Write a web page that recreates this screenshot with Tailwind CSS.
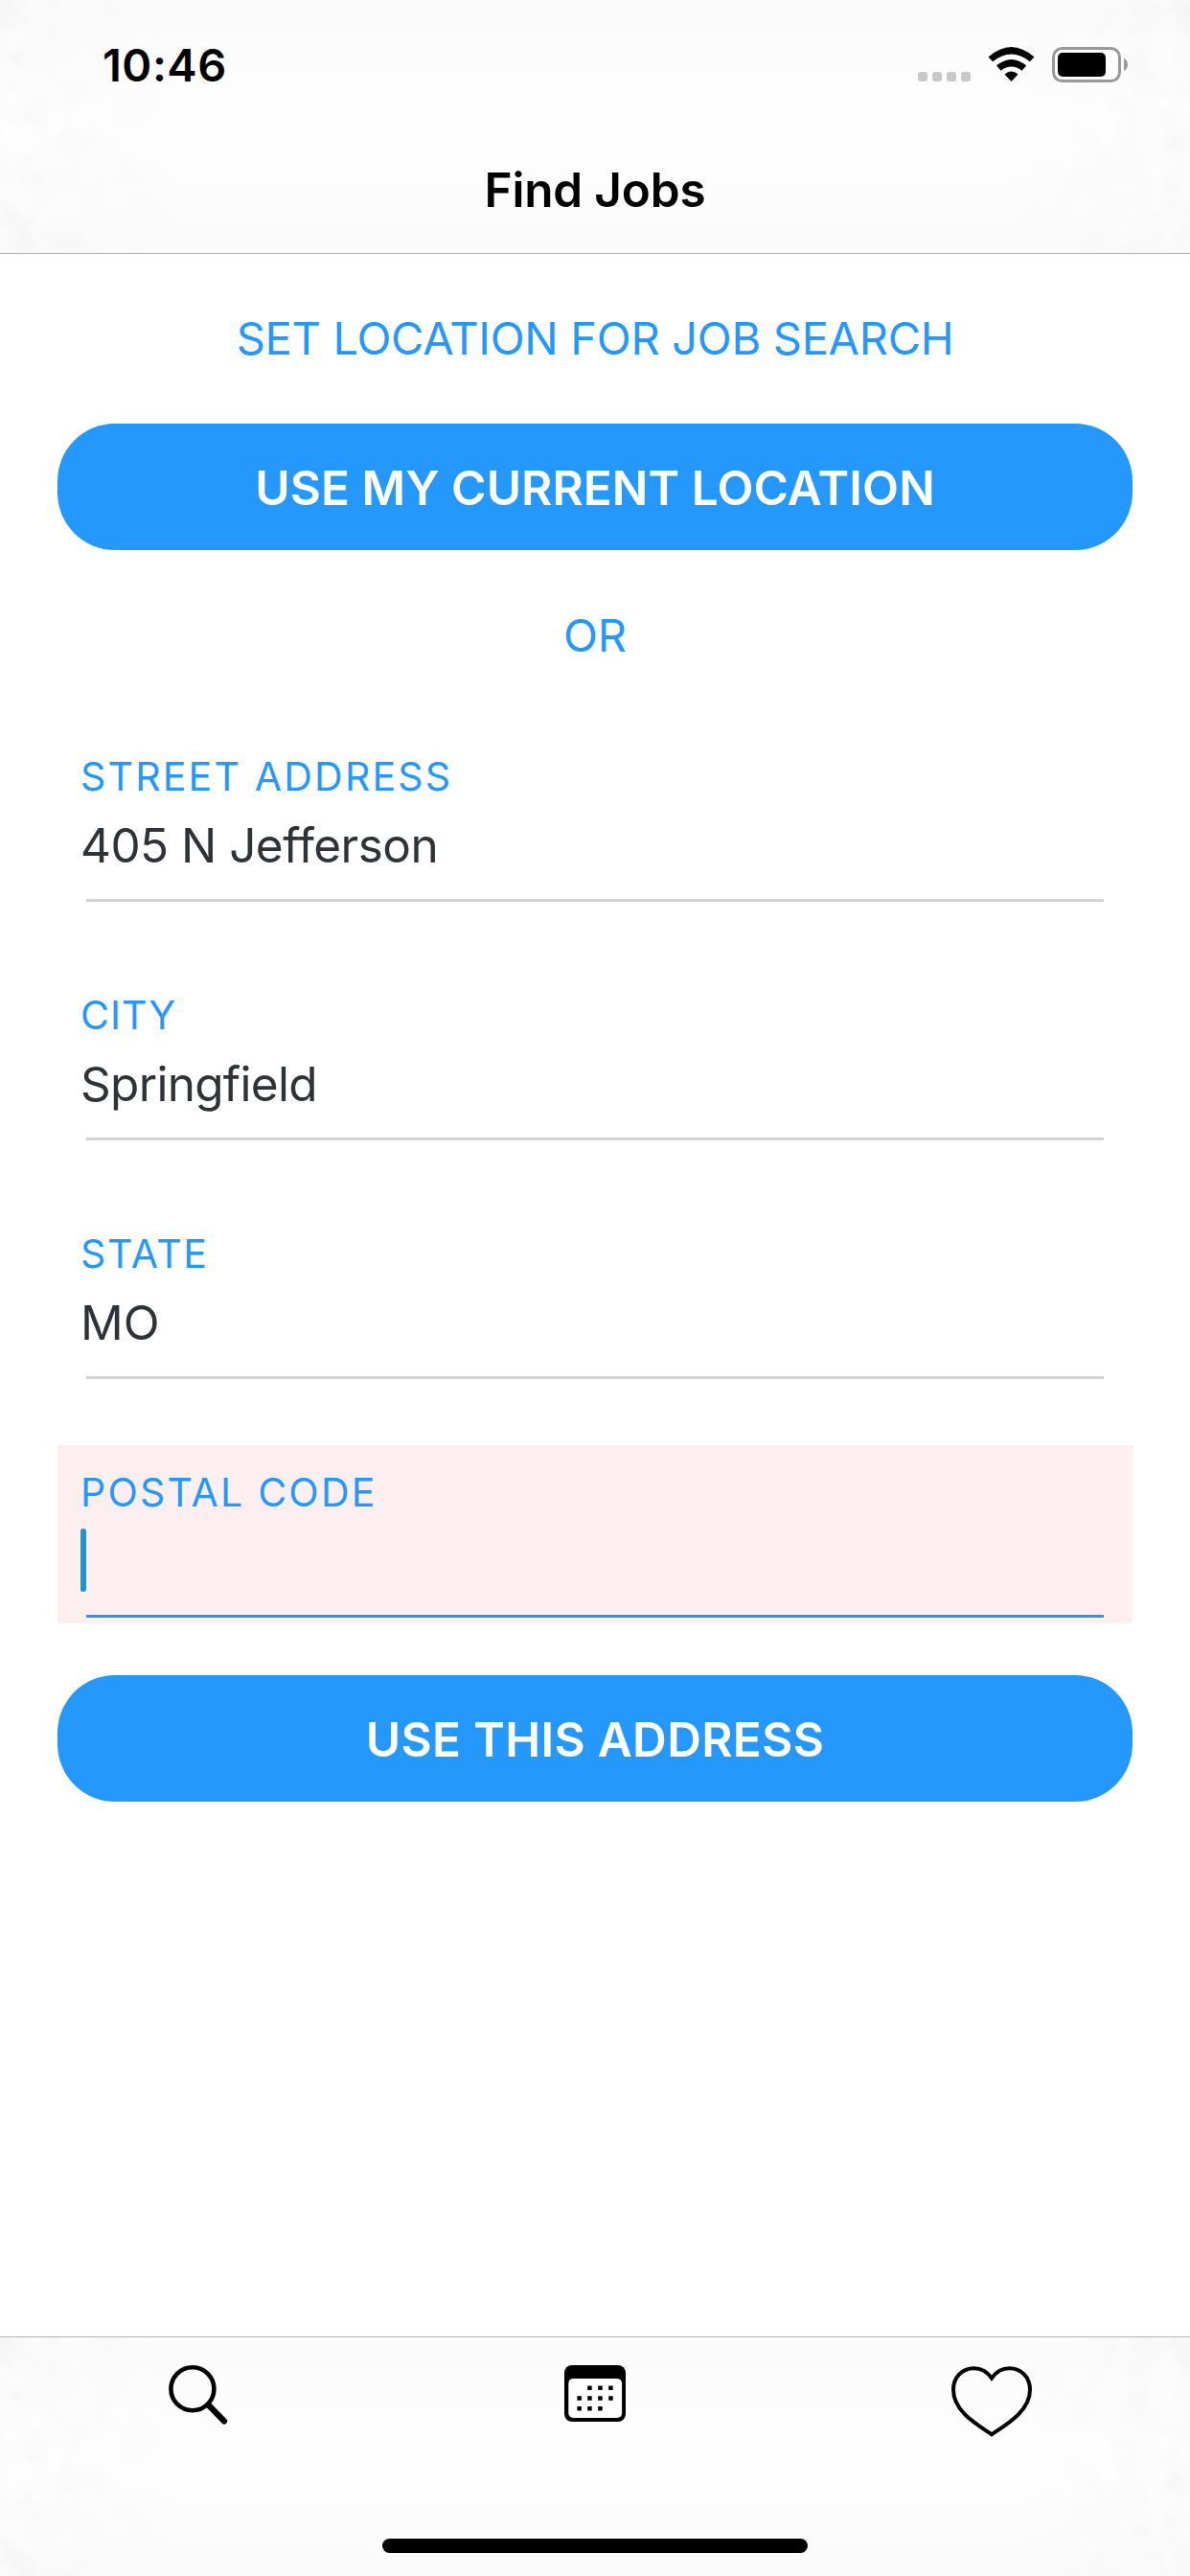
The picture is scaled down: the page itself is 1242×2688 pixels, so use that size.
<!DOCTYPE html>
<html lang="en">
<head>
<meta charset="utf-8">
<title>Find Jobs</title>
<script src="https://cdn.jsdelivr.net/npm/@tailwindcss/browser@4"></script>
</head>
<body class="bg-white">
<div class="flex h-[2688px] w-[1242px] flex-col overflow-hidden bg-white font-['Inter',sans-serif]">

  <header class="relative flex h-[265px] shrink-0 flex-col border-b border-[#b2b2b2] bg-linear-to-b from-[#fbfbfb] via-[#fefefe] to-[#fbfbfb]">
    <svg class="absolute inset-0 h-[264px] w-[1242px]" viewBox="0 0 1242 264">
      <defs>
        <filter id="paper" x="0" y="0" width="100%" height="100%">
          <feTurbulence type="fractalNoise" baseFrequency="0.03" numOctaves="3" seed="4"/>
          <feColorMatrix values="0 0 0 0 0.8  0 0 0 0 0.8  0 0 0 0 0.8  0.6 0 0 0 -0.2"/>
        </filter>
        <linearGradient id="edges"><stop offset="0" stop-color="#fff"/><stop offset=".15" stop-color="#000"/><stop offset=".85" stop-color="#000"/><stop offset="1" stop-color="#fff"/></linearGradient>
        <mask id="sides"><rect width="1242" height="264" fill="url(#edges)"/></mask>
      </defs>
      <g mask="url(#sides)"><rect width="1242" height="264" filter="url(#paper)"/></g>
    </svg>
    <div class="relative flex h-[132px] items-center justify-between pt-1 pr-[65px] pl-[107px]">
      <span class="text-[47px] leading-[60px] font-semibold tracking-[0.5px]">10:46</span>
      <div class="flex items-center">
        <svg class="h-[40px] w-[219px]" viewBox="958 48 219 40">
          <g fill="#c8c8c8"><rect x="958" y="75" width="10" height="10" rx="3"/><rect x="973" y="75" width="10" height="10" rx="3"/><rect x="988" y="75" width="10" height="10" rx="3"/><rect x="1003" y="75" width="10" height="10" rx="3"/></g>
          <path d="M1031.500 59.500Q1055.500 38.500 1079.500 59.500L1074.800 64.300Q1055.500 48.800 1036.200 64.300Z"/>
          <path d="M1040 68.500Q1055.500 55.300 1071.200 68.500L1066.500 73.700Q1055.500 65.300 1044.700 73.700Z"/>
          <path d="M1048.500 77.500Q1055.500 71.500 1062.500 77.500L1055.500 85Z"/>
          <rect x="1099.500" y="50.500" width="69" height="34" rx="9" fill="none" stroke="#999" stroke-width="3"/>
          <rect x="1104" y="55" width="50" height="25" rx="5"/>
          <path d="M1173 60.500Q1177 63.500 1177 67.500T1173 74Z" fill="#999"/>
        </svg>
      </div>
    </div>
    <h1 class="relative flex h-[132px] items-center justify-center"><span class="text-[49.5px] leading-[60px] font-semibold tracking-[-0.2px]">Find Jobs</span></h1>
  </header>

  <main class="flex flex-1 flex-col px-[60px] pt-[58px]">
    <p class="text-center text-[47px] leading-[60px] tracking-[-0.3px] text-[#2598fd]">SET LOCATION FOR JOB SEARCH</p>
    <button class="mt-[59px] h-[132px] rounded-[60px] bg-[#2598fd] pt-px text-[49.5px] leading-[60px] font-semibold tracking-[0.06px] text-white">USE MY CURRENT LOCATION</button>
    <p class="mt-[59px] text-center text-[47px] leading-[60px] text-[#2598fd]">OR</p>

    <form class="mt-[68px] flex flex-col gap-[63px] text-[#2f3237]">
      <label class="flex h-[186px] flex-col pt-[24px] pl-[24px]">
        <span class="text-[41px] leading-[50px] tracking-[2.2px] text-[#2598fd]">STREET ADDRESS</span>
        <span class="mt-[17px] text-[49.5px] leading-[60px] tracking-[-0.55px]">405 N Jefferson</span>
        <span class="mt-[26px] mr-[30px] ml-[6px] h-[3px] bg-[#d3d3d3]"></span>
      </label>
      <label class="flex h-[186px] flex-col pt-[24px] pl-[24px]">
        <span class="text-[41px] leading-[50px] tracking-[1px] text-[#2598fd]">CITY</span>
        <span class="mt-[17px] text-[49.5px] leading-[60px] tracking-[-0.7px]">Springfield</span>
        <span class="mt-[26px] mr-[30px] ml-[6px] h-[3px] bg-[#d3d3d3]"></span>
      </label>
      <label class="flex h-[186px] flex-col pt-[24px] pl-[24px]">
        <span class="text-[41px] leading-[50px] tracking-[1.7px] text-[#2598fd]">STATE</span>
        <span class="mt-[17px] text-[49.5px] leading-[60px]">MO</span>
        <span class="mt-[26px] mr-[30px] ml-[6px] h-[3px] bg-[#d3d3d3]"></span>
      </label>
      <label class="flex h-[186px] flex-col bg-[#fdefef] pt-[24px] pl-[24px]">
        <span class="text-[41px] leading-[50px] tracking-[2.2px] text-[#2598fd]">POSTAL CODE</span>
        <span class="mt-[13px] h-[66px] w-[6px] rounded-full bg-[#2593cc]"></span>
        <span class="mt-[24px] mr-[30px] ml-[6px] h-[3px] bg-[#2598fd]"></span>
      </label>
    </form>
    <button class="mt-[54px] h-[132px] rounded-[60px] bg-[#2598fd] pt-px text-[49.5px] leading-[60px] font-semibold tracking-[0.33px] text-white">USE THIS ADDRESS</button>
  </main>

  <nav class="relative flex h-[250px] shrink-0 flex-col border-t border-[#b2b2b2] bg-linear-to-b from-[#fbfbfb] via-[#fefefe] to-[#fbfbfb]">
    <svg class="absolute inset-0 h-[249px] w-[1242px]" viewBox="0 0 1242 249"><g mask="url(#sides)"><rect width="1242" height="249" filter="url(#paper)"/></g></svg>
    <div class="relative grid h-[147px] grid-cols-3">
      <a class="flex justify-center pt-[29px]">
        <svg class="h-[62px] w-[62px]" viewBox="176 2468 62 62" fill="none" stroke="#000"><circle cx="200.900" cy="2492.800" r="22.500" stroke-width="4.600"/><path d="M217.500 2509.500L234 2526.500" stroke-width="6.200" stroke-linecap="round"/></svg>
      </a>
      <a class="flex justify-center pt-[29px]">
        <svg class="h-[60px] w-[64px]" viewBox="589 2468 64 60">
          <rect x="589" y="2468" width="64" height="59" rx="8"/><rect x="593.300" y="2482" width="55.800" height="41" rx="5" fill="#fff"/>
          <path d="M613.200 2491.800h4.500M624.200 2491.800h4.500M635.200 2491.800h4.500M602.400 2502.500h4.500M613.200 2502.500h4.500M624.200 2502.500h4.500M635.200 2502.500h4.500M602.400 2513.200h4.500M613.200 2513.200h4.500M624.200 2513.200h4.500" stroke="#000" stroke-width="4.500"/>
        </svg>
      </a>
      <a class="flex justify-center pt-[29px]">
        <svg class="h-[76px] w-[86px]" viewBox="992 2468 86 76" fill="none" stroke="#000" stroke-width="4">
          <path d="M1035 2481.500C1030 2474.500 1023.500 2471.300 1016.500 2471.300C1004 2471.300 995 2481 995 2493.500C995 2516 1019 2529.500 1035 2540.300C1051 2529.500 1075 2516 1075 2493.500C1075 2481 1066 2471.300 1053.500 2471.300C1046.500 2471.300 1040 2474.500 1035 2481.500Z"/>
        </svg>
      </a>
    </div>
    <div class="relative mx-auto mt-[63px] h-[15px] w-[444px] rounded-full bg-black"></div>
  </nav>
</div>
</body>
</html>
